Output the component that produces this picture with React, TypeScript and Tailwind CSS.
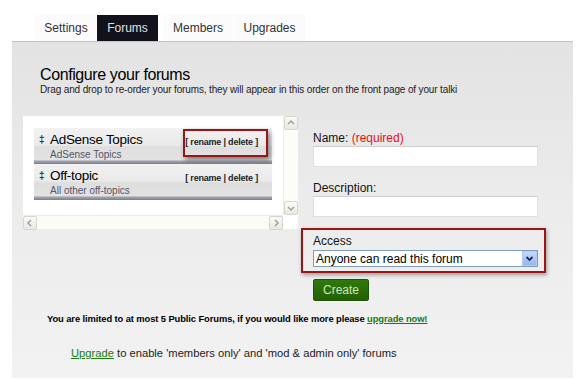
import React from 'react'

const font = { fontFamily: '"Liberation Sans", Arial, sans-serif' }

const tabs = [
  { label: 'Settings', w: 'w-[62px]', active: false },
  { label: 'Forums', w: 'w-[61px]', active: true },
  { label: 'Members', w: 'w-[70px] ml-[5px]', active: false },
  { label: 'Upgrades', w: 'w-[71px] ml-[1px]', active: false },
]

const forums = [
  { title: 'AdSense Topics', desc: 'AdSense Topics', highlighted: true },
  { title: 'Off-topic', desc: 'All other off-topics', highlighted: false },
]

function Arrow({ dir }: { dir: 'up' | 'down' | 'left' | 'right' }) {
  const d = {
    up: 'M2 6 L5 3 L8 6',
    down: 'M2 4 L5 7 L8 4',
    left: 'M6 2 L3 5 L6 8',
    right: 'M4 2 L7 5 L4 8',
  }[dir]
  return (
    <svg width="10" height="10" viewBox="0 0 10 10">
      <path d={d} fill="none" stroke="#9aa0a8" strokeWidth="1.5" />
    </svg>
  )
}

function ScrollBtn({ dir }: { dir: 'up' | 'down' | 'left' | 'right' }) {
  return (
    <div className="w-[14px] h-[14px] flex items-center justify-center border border-[#d6d6cc] bg-gradient-to-b from-[#fbfbf6] to-[#e9e9e0] rounded-[2px]">
      <Arrow dir={dir} />
    </div>
  )
}

function ForumItem({ title, desc, highlighted }: { title: string; desc: string; highlighted: boolean }) {
  return (
    <div className="relative h-[36px] w-[238px] bg-[linear-gradient(to_bottom,#f2f2f2_0%,#e9e9e9_48%,#dedede_52%,#e2e2e2_88%,#a4a4b0_92%,#7c7c8c_100%)] flex">
      <div className="w-[16px] pl-[5px] pt-[4px] text-[10px] font-bold text-[#333]">‡</div>
      <div className="flex-1 pt-[3px]">
        <div className="text-[13.5px] leading-[18px] tracking-[-0.3px] text-black">{title}</div>
        <div className="text-[10px] leading-[12px] text-[#555566]">{desc}</div>
      </div>
      <div className="pr-[14px] pt-[8px] text-[9px] font-bold text-[#222] tracking-[-0.2px]">
        [ rename | delete ]
      </div>
      {highlighted && (
        <div className="absolute left-[149px] top-[1px] w-[85px] h-[28px] border-2 border-[#9b1515] shadow-[2px_3px_5px_rgba(0,0,0,0.45)]" />
      )}
    </div>
  )
}

export default function App() {
  return (
    <div className="w-[580px] h-[380px] bg-white overflow-hidden text-[#222]" style={font}>
      {/* Tabs */}
      <div className="flex pl-[35px] pt-[15px] h-[41px]">
        {tabs.map((t) => (
          <div
            key={t.label}
            className={`${t.w} h-[26px] flex items-center justify-center text-[12px] ${
              t.active ? 'bg-[#12121c] text-[#e0e0e0]' : 'bg-[#fbfbfb] text-[#333]'
            }`}
          >
            {t.label}
          </div>
        ))}
      </div>

      {/* Panel */}
      <div className="ml-[12px] w-[561px] h-[337px] border-t border-[#c4c4c4] bg-gradient-to-b from-[#e3e3e3] via-[#ececec] to-[#f2f2f2]">
        <div className="pl-[28px] pt-[23px]">
          <h1 className="text-[16px] leading-[19px] tracking-[-0.4px] text-black">Configure your forums</h1>
          <p className="text-[10px] leading-[12px] text-[#222] tracking-[-0.14px]">
            Drag and drop to re-order your forums, they will appear in this order on the front page of your talki
          </p>
        </div>

        <div className="flex mt-[20px]">
          {/* Forum list */}
          <div className="ml-[11px] w-[275px] h-[113px] bg-white flex flex-col">
            <div className="flex flex-1">
              <div className="flex-1 pl-[11px] pt-[12px]">
                {forums.map((f) => (
                  <ForumItem key={f.title} {...f} />
                ))}
              </div>
              <div className="w-[15px] flex flex-col justify-between bg-[#fcfcf8] border-l border-[#eeeee6]">
                <ScrollBtn dir="up" />
                <ScrollBtn dir="down" />
              </div>
            </div>
            <div className="flex h-[14px]">
              <div className="w-[260px] flex justify-between bg-[#fcfcf6] border-t border-[#eeeee6]">
                <ScrollBtn dir="left" />
                <ScrollBtn dir="right" />
              </div>
            </div>
          </div>

          {/* Form */}
          <div className="ml-[3px] w-[245px]">
            <div className="pl-[12px] pt-[15px]">
              <label className="block text-[12px] leading-[14px] text-[#111]">
                Name: <span className="text-[#ee1111]">(required)</span>
              </label>
              <input className="block mt-[1px] w-[225px] h-[21px] bg-white border border-[#e0e0e0] border-t-[#d0d0d0] outline-none" />
              <label className="block mt-[14px] text-[12px] leading-[14px] text-[#111]">Description:</label>
              <input className="block mt-[1px] w-[225px] h-[21px] bg-white border border-[#e0e0e0] border-t-[#d0d0d0] outline-none" />
            </div>
            <div className="mt-[11px] h-[45px] border-2 border-[#9b1515] shadow-[1px_2px_4px_rgba(0,0,0,0.35)] pl-[10px] pt-[4px]">
              <div className="text-[12px] leading-[14px] text-[#111]">Access</div>
              <div className="mt-[2px] w-[225px] h-[17px] border border-[#7f9db9] bg-white flex items-center">
                <span className="flex-1 pl-[2px] text-[12px] leading-[14px] text-black">Anyone can read this forum</span>
                <div className="w-[15px] h-[15px] bg-gradient-to-b from-[#c6d8fb] to-[#99b4ee] border border-[#b5c9f2] flex items-center justify-center">
                  <svg width="9" height="9" viewBox="0 0 9 9">
                    <path d="M1.5 3 L4.5 6 L7.5 3" fill="none" stroke="#1c2a5a" strokeWidth="1.8" />
                  </svg>
                </div>
              </div>
            </div>
            <button className="mt-[6px] ml-[12px] w-[56px] h-[22px] rounded-[2px] bg-gradient-to-b from-[#2f7a0c] to-[#245f06] border border-[#1f5405] text-[12px] text-[#c9ebb0]">
              Create
            </button>
          </div>
        </div>

        <p className="mt-[11px] pl-[35px] text-[9.4px] font-bold text-black tracking-[-0.1px]">
          You are limited to at most 5 Public Forums, if you would like more please{' '}
          <a className="text-[#1a7a12] underline">upgrade now!</a>
        </p>
        <p className="mt-[19px] pl-[59px] text-[11.2px] text-[#222]">
          <a className="text-[#1a7a12] underline">Upgrade</a> to enable 'members only' and 'mod &amp; admin only' forums
        </p>
      </div>
    </div>
  )
}
